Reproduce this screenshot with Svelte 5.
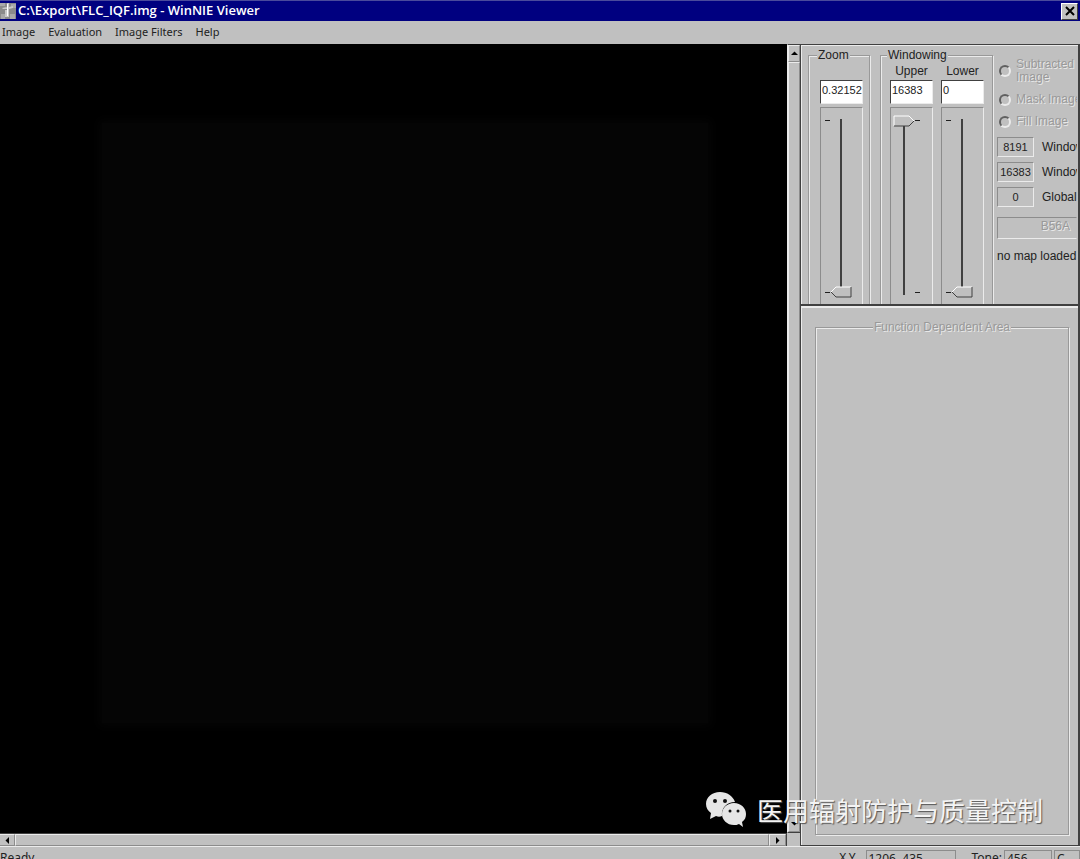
<script lang="ts">
	type Channel = {
		id: string
		label: string
		text: string
		value: number
		side: 'left' | 'right'
	}

	const menus = ['Image', 'Evaluation', 'Image Filters', 'Help']

	let zoom: Channel = $state({ id: 'zoom', label: 'Zoom', text: '0.32152', value: 0, side: 'left' })

	let channels: Channel[] = $state([
		{ id: 'upper', label: 'Upper', text: '16383', value: 100, side: 'right' },
		{ id: 'lower', label: 'Lower', text: '0', value: 0, side: 'left' },
	])

	const sources = ['Subtracted Image', 'Mask Image', 'Fill Image']

	const readouts = [
		{ value: '8191', label: 'Window' },
		{ value: '16383', label: 'Window' },
		{ value: '0', label: 'Global' },
	]
</script>

{#snippet slider(channel: Channel)}
	<div class="slider {channel.side}">
		<span class="ticks" aria-hidden="true"><i></i><i></i></span>
		<input type="range" min="0" max="100" aria-label={channel.label} bind:value={channel.value} />
	</div>
{/snippet}

{#snippet arrow(d: string)}
	<svg width="7" height="7" viewBox="0 0 7 7" aria-hidden="true"><path {d} /></svg>
{/snippet}

<div class="window">
	<header class="titlebar">
		<svg class="app-icon" width="16" height="16" viewBox="0 0 16 16" aria-hidden="true">
			<rect width="16" height="16" fill="#8b8b8b" />
			<path d="M0 0h5v3H0zM11 1h5v4h-5zM1 11h4v5H1zM10 11h5v5h-5z" fill="#a9a9a9" />
			<path d="M7 0h2v14H7zM2 5l5-1v2H3zM9 4l4-1v2l-4 1zM5 7h2v7H5z" fill="#c9c9c9" />
			<path d="M7 1h1v12H7z" fill="#fff" />
		</svg>
		<h1>C:\Export\FLC_IQF.img - WinNIE Viewer</h1>
		<button class="close" aria-label="Close">
			<svg width="10" height="10" viewBox="0 0 10 10"><path d="M1 1l8 8M9 1l-8 8" /></svg>
		</button>
	</header>

	<nav class="menubar">
		{#each menus as menu}
			<button>{menu}</button>
		{/each}
	</nav>

	<main>
		<div class="viewer">
			<div class="canvas"><div class="exposure"></div></div>
			<div class="scroll vertical">
				<button aria-label="Scroll up">{@render arrow('M0 5h7L3.500 1.500z')}</button>
				<div class="thumb"></div>
				<button aria-label="Scroll down">{@render arrow('M0 2h7L3.500 5.500z')}</button>
			</div>
			<div class="scroll horizontal">
				<button aria-label="Scroll left">{@render arrow('M5 0v7L1.500 3.500z')}</button>
				<div class="thumb"></div>
				<button aria-label="Scroll right">{@render arrow('M2 0v7L5.500 3.500z')}</button>
			</div>
		</div>

		<aside>
			<section class="controls">
				<fieldset>
					<legend>Zoom</legend>
					<div class="channel">
						<span class="caption"></span>
						<input class="field" aria-label="Zoom factor" bind:value={zoom.text} />
						{@render slider(zoom)}
					</div>
				</fieldset>

				<fieldset>
					<legend>Windowing</legend>
					{#each channels as channel (channel.id)}
						<div class="channel">
							<label class="caption" for={channel.id}>{channel.label}</label>
							<input class="field" id={channel.id} bind:value={channel.text} />
							{@render slider(channel)}
						</div>
					{/each}
				</fieldset>

				<div class="info">
					<div class="sources">
						{#each sources as source}
							<label class="disabled"><input type="radio" name="source" disabled /><span>{source}</span></label>
						{/each}
					</div>
					<div class="readouts">
						{#each readouts as readout}
							<div><output>{readout.value}</output><span>{readout.label}</span></div>
						{/each}
					</div>
					<button class="map disabled" disabled>B56A</button>
					<p>no map loaded</p>
				</div>
			</section>

			<section class="function">
				<fieldset class="area">
					<legend class="disabled">Function Dependent Area</legend>
				</fieldset>
			</section>
		</aside>
	</main>

	<footer>
		<span class="ready">Ready</span>
		<span>X,Y</span>
		<span class="cell position">1206, 435</span>
		<span>Tone:</span>
		<span class="cell tone">456</span>
		<span class="cell last">C</span>
	</footer>

	<div class="watermark">
		<svg width="42" height="38" viewBox="0 0 42 38" aria-hidden="true">
			<path
				d="M15 1C7 1 1 6 1 13c0 4 2 7 5 9l-1 6 6-3c2 1 4 1 6 0-1-8 5-14 13-14C28 5 22 1 15 1z"
				fill="#e6e6e6"
			/>
			<path
				d="M29 12c-7 0-12 5-12 11s5 11 12 11c2 0 3 0 5-1l4 3-1-5c3-2 4-5 4-8 0-6-5-11-12-11z"
				fill="#e6e6e6"
			/>
			<g fill="#111">
				<circle cx="10" cy="10" r="2" /><circle cx="20" cy="10" r="2" />
				<circle cx="25" cy="20" r="1.500" /><circle cx="33" cy="20" r="1.500" />
			</g>
		</svg>
		<span>医用辐射防护与质量控制</span>
	</div>
</div>

<style>
	:global(body) {
		margin: 0;
	}

	.window {
		--face: #c0c0c0;
		--light: #ebebeb;
		--shade: #8c8c8c;
		--dark: #404040;

		position: relative;
		display: flex;
		flex-direction: column;
		height: 100vh;
		overflow: hidden;
		background: var(--face);
		color: #222;
		font: 12px/14px 'Liberation Sans', Arial, sans-serif;

		:global(*) {
			box-sizing: border-box;
		}
	}

	button,
	input {
		margin: 0;
		padding: 0;
		border: 0;
		border-radius: 0;
		background: none;
		color: inherit;
		font: inherit;
	}

	fieldset {
		min-width: 0;
		margin: 0;
		border: 1px solid #999;
		box-shadow:
			1px 1px 0 var(--light),
			inset 1px 1px 0 var(--light);
	}

	legend {
		padding: 0 1px;
		background: var(--face);
	}

	.disabled {
		color: #999;
		text-shadow: 1px 1px 0 #e8e8e8;
	}

	.titlebar {
		display: flex;
		align-items: center;
		flex: none;
		height: 21px;
		padding-right: 2px;
		border-top: 1px solid #4a4a9c;
		background: #000080;
		color: #fff;

		h1 {
			flex: 1;
			height: 20px;
			margin: 0 0 0 2px;
			font: 600 13px/18px 'Open Sans', Tahoma, sans-serif;
		}
	}

	.close {
		display: grid;
		place-items: center;
		width: 17px;
		height: 17px;
		border: 1px solid;
		border-color: #fff var(--dark) var(--dark) #fff;
		background: var(--face);

		path {
			stroke: #000;
			stroke-width: 2;
		}
	}

	.menubar {
		display: flex;
		align-items: flex-start;
		flex: none;
		gap: 13px;
		height: 23px;
		padding-left: 2px;
		font: 11px/22px 'Noto Sans', Tahoma, sans-serif;
	}

	main {
		display: grid;
		flex: 1;
		grid-template-columns: 1fr 280px;
		min-height: 0;
	}

	.viewer {
		display: grid;
		grid-template: 1fr 13px / 1fr 13px;
		min-height: 0;
	}

	.canvas {
		padding: 10% 10% 14% 13%;
		background: #000;
	}

	.exposure {
		height: 100%;
		background: #050505;
		box-shadow: 0 0 10px 4px #050505;
	}

	.scroll {
		display: flex;
		border: 1px solid var(--dark);

		.thumb {
			flex: 1;
			border: 1px solid;
			border-color: var(--light) var(--shade) var(--shade) var(--light);
		}

		button {
			display: grid;
			flex: none;
			place-items: center;
			width: 17px;
			border: 1px solid;
			border-color: var(--light) var(--shade) var(--shade) var(--light);
		}
	}

	.vertical {
		flex-direction: column;
		border-width: 1px 0 1px 1px;
		border-left-color: var(--light);

		button {
			width: auto;
			height: 17px;
		}
	}

	.horizontal {
		border-width: 1px 1px 0 0;

		button:first-child {
			width: 15px;
			border-left: 0;
		}
	}

	aside {
		display: grid;
		grid-template-rows: 262px 1fr;
		min-height: 0;
		border-right: 2px solid var(--dark);
		border-left: 1px solid var(--dark);
	}

	.controls {
		display: flex;
		gap: 10px;
		padding: 3px 1px 0 7px;
		overflow: hidden;
		border-top: 1px solid var(--dark);
		border-bottom: 2px solid var(--dark);
		box-shadow: inset 1px 1px 0 var(--light);

		fieldset {
			display: flex;
			flex: none;
			gap: 8px;
			height: 270px;
			padding: 0 8px 0 9px;
		}

		fieldset:first-child {
			padding: 0 6px 0 11px;
		}

		legend {
			margin-left: -3px;
		}
	}

	.channel {
		display: grid;
		grid-template-rows: 16px 24px 206px;
		row-gap: 2px;
		width: 43px;
	}

	.caption {
		line-height: 18px;
		text-align: center;
	}

	.field {
		width: 100%;
		padding: 0 0 4px 1px;
		border: 1px solid;
		border-color: var(--dark) var(--light) var(--light) var(--dark);
		background: #fff;
		font-size: 11px;
	}

	.slider {
		display: flex;
		padding: 7px 3px 0 4px;
		margin-top: 1px;
		border: 1px solid;
		border-color: var(--shade) var(--light) var(--light) var(--shade);

		input {
			width: 22px;
			height: 183px;
			appearance: none;
			direction: rtl;
			writing-mode: vertical-lr;
			background: linear-gradient(var(--dark), var(--dark)) center / 2px 176px no-repeat;
		}

		input::-webkit-slider-thumb {
			width: 22px;
			height: 12px;
			appearance: none;
			background: url("data:image/svg+xml,%3Csvg xmlns='http://www.w3.org/2000/svg' width='22' height='12'%3E%3Cpath d='M1 6L6 1H21V11H6Z' fill='%23c0c0c0'/%3E%3Cpath d='M1 6L6 1H21' fill='none' stroke='%23fff'/%3E%3Cpath d='M1 6L6 11H21V1' fill='none' stroke='%23404040'/%3E%3C/svg%3E");
		}
	}

	.slider.right {
		flex-direction: row-reverse;
		justify-content: flex-end;
		padding-left: 2px;

		input::-webkit-slider-thumb {
			background: url("data:image/svg+xml,%3Csvg xmlns='http://www.w3.org/2000/svg' width='22' height='12'%3E%3Cpath d='M1 1H16L21 6L16 11H1Z' fill='%23c0c0c0'/%3E%3Cpath d='M1 11V1H16L21 6' fill='none' stroke='%23fff'/%3E%3Cpath d='M1 11H16L21 6' fill='none' stroke='%23404040'/%3E%3C/svg%3E");
		}
	}

	.ticks {
		display: flex;
		flex-direction: column;
		justify-content: space-between;
		width: 5px;
		height: 183px;
		padding: 5px 0;

		i {
			height: 1px;
			background: #202020;
		}
	}

	.info {
		flex: 1;
		min-width: 0;
		margin-left: -6px;
		overflow: hidden;
		white-space: nowrap;

		p {
			margin: 10px 0 0;
		}
	}

	.sources {
		display: grid;
		gap: 9px;
		padding: 10px 0 0 2px;
		line-height: 13px;

		label {
			display: flex;
			align-items: center;
			gap: 5px;
		}

		label:first-child span {
			white-space: normal;
		}

		input {
			flex: none;
			width: 12px;
			height: 12px;
			appearance: none;
			border: 2px solid;
			border-color: #606060 var(--light) var(--light) #606060;
			border-radius: 50%;
		}
	}

	.readouts {
		display: grid;
		gap: 5px;
		margin-top: 9px;

		div {
			display: flex;
			gap: 8px;
		}

		output {
			flex: none;
			width: 37px;
			height: 20px;
			border: 1px solid;
			border-color: var(--shade) var(--light) var(--light) var(--shade);
			font-size: 11px;
			line-height: 18px;
			text-align: center;
		}

		span {
			line-height: 20px;
		}
	}

	.map {
		display: block;
		width: 100%;
		height: 22px;
		margin-top: 10px;
		padding: 0 6px 4px 0;
		border: 1px solid;
		border-color: var(--shade) transparent var(--light) var(--shade);
		text-align: right;
	}

	.function {
		display: grid;
		padding: 14px 9px 10px 14px;
		border-bottom: 1px solid var(--dark);
		box-shadow: inset 1px 2px 0 var(--light);
	}

	.area {
		padding: 0;

		legend {
			margin: 0 auto;
		}
	}

	footer {
		display: flex;
		flex: none;
		gap: 10px;
		height: 13px;
		padding-top: 3px;
		border-top: 1px solid var(--light);
		font: 12px/16px 'Noto Sans', Tahoma, sans-serif;
	}

	.ready {
		flex: 1;
	}

	.cell {
		height: 18px;
		padding-left: 2px;
		border: 1px solid var(--shade);
	}

	.position {
		width: 90px;
		margin-right: 6px;
	}

	.tone {
		width: 48px;
		margin-left: -8px;
	}

	.last {
		width: 26px;
		margin-left: -8px;
	}

	/* Floats over both the image and the side panel */
	.watermark {
		position: absolute;
		right: 37px;
		bottom: 30px;
		display: flex;
		align-items: center;
		gap: 10px;
		color: #f4f4f4;
		font: 26px/38px 'Noto Sans CJK SC', sans-serif;
		text-shadow: 1px 1px 1px #555;
	}
</style>
